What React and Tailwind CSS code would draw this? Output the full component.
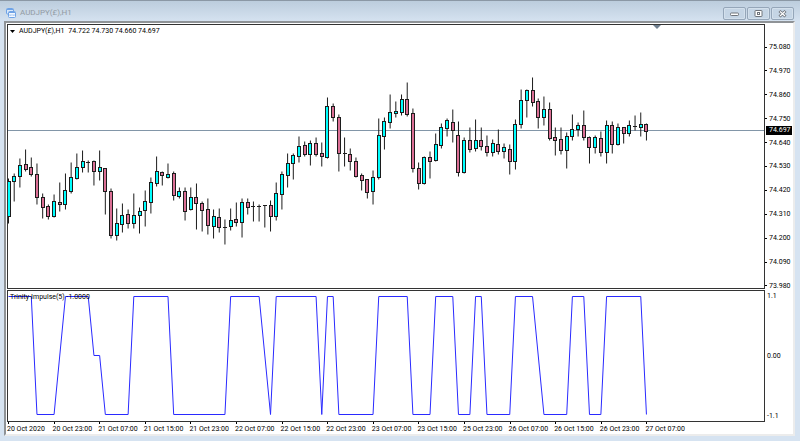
import React from "react";

const STEP = 5.696;
const PANE_TOP = 24;
const INDICATOR_TOP = 291;

// [high, body top, body bottom, low, u = up / d = down]
const candles = [
  [178, 181, 216, 222, "u"], [173, 176, 181, 200, "u"], [158, 165, 176, 186, "u"], [149, 164, 169, 170, "d"],
  [157, 167, 174, 175, "d"], [163, 174, 197, 203, "d"], [193, 197, 207, 217, "d"], [204, 206, 216, 218, "d"],
  [194, 201, 216, 216, "u"], [182, 202, 204, 210, "d"], [173, 190, 204, 208, "u"], [162, 177, 191, 192, "u"],
  [153, 167, 178, 178, "u"], [150, 161, 167, 171, "u"], [160, 161, 162, 171, "d"], [160, 161, 171, 184, "d"],
  [150, 167, 171, 179, "u"], [168, 168, 191, 213, "d"], [188, 191, 235, 237, "d"], [208, 223, 235, 239, "u"],
  [203, 215, 224, 231, "u"], [209, 214, 223, 227, "d"], [193, 215, 223, 227, "u"], [207, 211, 215, 232, "u"],
  [190, 201, 210, 225, "u"], [177, 182, 202, 212, "u"], [156, 171, 183, 185, "u"], [171, 172, 175, 184, "d"],
  [163, 174, 177, 177, "u"], [171, 173, 195, 199, "d"], [187, 191, 196, 197, "u"], [187, 191, 211, 219, "d"],
  [187, 197, 209, 209, "u"], [183, 197, 203, 228, "d"], [201, 203, 210, 230, "d"], [198, 209, 225, 233, "d"],
  [209, 216, 226, 237, "u"], [208, 217, 227, 231, "d"], [219, 226, 227, 243, "d"], [208, 220, 226, 229, "u"],
  [202, 219, 222, 225, "d"], [198, 202, 222, 236, "u"], [198, 202, 207, 213, "d"], [201, 205, 206, 220, "d"],
  [204, 205, 206, 220, "d"], [205, 205, 205, 226, "d"], [200, 205, 216, 230, "d"], [182, 193, 216, 219, "u"],
  [171, 174, 194, 208, "u"], [153, 163, 175, 186, "u"], [153, 155, 163, 178, "u"], [136, 146, 156, 161, "u"],
  [141, 145, 154, 155, "d"], [140, 143, 154, 164, "u"], [137, 143, 154, 155, "d"], [142, 153, 156, 165, "d"],
  [97, 106, 157, 157, "u"], [103, 106, 117, 120, "d"], [114, 117, 153, 170, "d"], [137, 152, 153, 165, "d"],
  [148, 154, 161, 169, "d"], [157, 161, 176, 176, "d"], [173, 175, 180, 189, "d"], [179, 179, 192, 197, "d"],
  [170, 177, 191, 203, "u"], [118, 135, 177, 178, "u"], [117, 121, 136, 148, "u"], [94, 112, 122, 127, "u"],
  [101, 111, 113, 116, "u"], [94, 99, 112, 114, "u"], [82, 99, 114, 115, "d"], [108, 113, 168, 171, "d"],
  [162, 168, 183, 188, "d"], [156, 157, 183, 183, "u"], [151, 157, 161, 177, "d"], [133, 144, 160, 160, "u"],
  [123, 127, 145, 147, "u"], [118, 120, 128, 135, "u"], [109, 122, 130, 141, "d"], [121, 135, 172, 175, "d"],
  [137, 140, 172, 172, "u"], [127, 140, 149, 151, "d"], [119, 140, 148, 150, "u"], [127, 140, 146, 149, "d"],
  [135, 146, 152, 155, "d"], [139, 143, 152, 155, "u"], [129, 144, 151, 153, "d"], [143, 147, 151, 157, "u"],
  [144, 149, 161, 173, "d"], [119, 124, 161, 168, "u"], [89, 100, 124, 127, "u"], [89, 90, 100, 116, "u"],
  [77, 90, 102, 105, "d"], [98, 101, 117, 127, "d"], [96, 109, 117, 124, "u"], [102, 109, 138, 139, "d"],
  [127, 137, 140, 154, "d"], [127, 139, 150, 153, "d"], [132, 136, 150, 167, "u"], [114, 129, 136, 139, "u"],
  [122, 125, 129, 135, "u"], [110, 125, 137, 139, "d"], [136, 137, 147, 162, "d"], [135, 137, 147, 152, "u"],
  [131, 138, 152, 155, "d"], [120, 125, 152, 162, "u"], [121, 125, 144, 152, "d"], [123, 127, 144, 144, "u"],
  [127, 127, 133, 142, "d"], [120, 125, 133, 135, "u"], [115, 125, 126, 129, "d"], [112, 124, 127, 135, "u"],
  [123, 124, 131, 139, "d"],
];

// [bar index, impulse value]
const impulse = [
  [0, 1], [4, 1], [5, -1], [8, -1], [10, 1], [14, 1], [15, 0], [16, 0], [17, -1], [21, -1], [22, 1], [28, 1],
  [29, -1], [38, -1], [39, 1], [44, 1], [46, -1], [47, 1], [54, 1], [55, -1], [56, 1], [57, 1], [58, -1],
  [64, -1], [65, 1], [70, 1], [71, -1], [74, -1], [75, 1], [78, 1], [79, -1], [81, -1], [82, 1], [83, 1],
  [84, -1], [88, -1], [89, 1], [92, 1], [94, -1], [98, -1], [99, 1], [101, 1], [102, -1], [104, -1],
  [105, 1], [111, 1], [112, -1],
];

const prices = [
  "75.080", "74.970", "74.860", "74.750", "74.640", "74.530",
  "74.420", "74.310", "74.200", "74.090", "73.980",
];

const times = [
  "20 Oct 2020", "20 Oct 23:00", "21 Oct 07:00", "21 Oct 15:00", "21 Oct 23:00",
  "22 Oct 07:00", "22 Oct 15:00", "22 Oct 23:00", "23 Oct 07:00", "23 Oct 15:00",
  "25 Oct 23:00", "26 Oct 07:00", "26 Oct 15:00", "26 Oct 23:00", "27 Oct 07:00",
];

const Candle = ({ index, data }) => {
  const [high, top, bottom, low, dir] = data;
  const x = index * STEP + 0.5;
  // bodies snap to whole pixels so their outline stays sharp
  const left = Math.round(x) - 1.5;
  const y = (v) => v - PANE_TOP - 0.5;
  return (
    <g stroke="#1c1c1c">
      <line x1={x} x2={x} y1={y(high)} y2={y(low) + 1} />
      {bottom - top < 2 ? (
        <line x1={left - 0.5} x2={left + 3.5} y1={y(bottom)} y2={y(bottom)} />
      ) : (
        <rect
          x={left}
          y={y(top)}
          width={3}
          height={bottom - top}
          fill={dir === "u" ? "#00ffff" : "#db6f95"}
        />
      )}
    </g>
  );
};

const PriceChart = () => (
  <svg className="block h-full w-full" aria-label="Price chart">
    <line x1="0" x2="100%" y1="105.5" y2="105.5" stroke="#8296a8" />
    {candles.map((c, i) => (
      <Candle key={i} index={i} data={c} />
    ))}
    <path d="M645 0h8l-4 4z" fill="#708090" />
  </svg>
);

const ImpulseChart = () => (
  <svg className="block h-full w-full" aria-label="Trinity Impulse">
    <polyline
      points={impulse
        .map(([i, v]) => `${i * STEP + 0.5},${355.5 - v * 59 - INDICATOR_TOP}`)
        .join(" ")}
      fill="none"
      stroke="#2a2aff"
    />
  </svg>
);

const AxisLabel = ({ children }) => (
  <div className="flex h-[10px] items-center gap-[2px]">
    <span className="h-px w-[2px] bg-black" />
    <span>{children}</span>
  </div>
);

const WindowButton = ({ label, children }) => (
  <button
    type="button"
    aria-label={label}
    className="flex h-[13px] w-[23px] items-center justify-center rounded-[2px] border border-[#95a6b9] bg-[#c5d5e5] shadow-[inset_0_0_0_1px_#d3e0ec]"
  >
    <svg width="11" height="9" viewBox="0 0 11 9" fill="none">
      {children}
    </svg>
  </button>
);

const TitleBar = () => (
  <header className="flex h-[21px] items-center justify-between border-t border-[#8b98a5] bg-linear-to-b from-[#bccddd] to-[#d5e2f0] pr-[6px] pl-[6px]">
    <div className="flex items-center gap-[4px] pt-[4px]">
      <svg width="10" height="10" viewBox="0 0 10 10" fill="none">
        <rect x="0.500" y="0.500" width="7" height="5.500" rx="1" fill="#d9e9fb" stroke="#6fa3e6" />
        <path d="M1 1.500h6" stroke="#6fa3e6" />
        <rect x="2.500" y="3.500" width="7" height="6" rx="1" fill="#f4f9ff" stroke="#6fa3e6" />
        <path d="M3 4.500h6" stroke="#6fa3e6" />
        <path d="M4 8V6.500l1 1 1-1 1 1 1-1V8" stroke="#8db6ec" strokeWidth="0.800" />
      </svg>
      <h1 className="text-[8px] leading-[10px] text-[#929aa3]">AUDJPY(£),H1</h1>
    </div>
    <div className="flex gap-[1px] pt-[4px]">
      <WindowButton label="Minimize">
        <rect x="1.500" y="4" width="8" height="2.500" rx="0.800" fill="#fff" stroke="#6f747b" />
      </WindowButton>
      <WindowButton label="Restore">
        <rect x="2" y="1.500" width="7" height="6" rx="0.500" fill="#fff" stroke="#6f747b" />
        <rect x="4.500" y="3.500" width="2" height="2" fill="#fff" stroke="#6f747b" />
      </WindowButton>
      <WindowButton label="Close">
        <path d="M2.500 2l6 5.500M8.500 2l-6 5.500" stroke="#6f747b" strokeWidth="3" />
        <path d="M3 2.500l5 4.500M8 2.500l-5 4.500" stroke="#fff" strokeWidth="1.200" />
      </WindowButton>
    </div>
  </header>
);

const App = () => {
  return (
    <div className="flex min-h-screen flex-col bg-[#d6e3f1] font-['Roboto','Noto_Sans',sans-serif] text-[7px] leading-[10px] text-black">
      <TitleBar />
      <main className="mr-[5px] ml-[4px] border-2 border-t-[#8f9397] border-r-[#ececec] border-b-[#ececec] border-l-[#8f9397] bg-white pt-px pl-px">
        <div className="flex">
          <div className="flex min-w-0 flex-1 flex-col">
            <section className="relative h-[265px] border border-[#333]">
              <PriceChart />
              <div className="absolute top-[1px] left-[2px] flex items-center gap-[4px] whitespace-nowrap">
                <svg width="5" height="3" viewBox="0 0 5 3">
                  <path d="M0 0h5L2.500 3z" fill="#000" />
                </svg>
                <span>AUDJPY(£),H1</span>
                <span>74.722 74.730 74.660 74.697</span>
              </div>
            </section>
            <section className="relative mt-px h-[132px] border border-[#333]">
              <ImpulseChart />
              <div className="absolute top-px left-[2px] whitespace-nowrap">
                Trinity-Impulse(5) -1.0000
              </div>
            </section>
          </div>
          <aside className="relative w-[28px] shrink-0">
            <div className="flex h-[267px] flex-col justify-between pt-[18px]">
              {prices.map((p) => (
                <AxisLabel key={p}>{p}</AxisLabel>
              ))}
            </div>
            <div className="flex h-[130px] flex-col justify-between pl-[2px]">
              <span>1.1</span>
              <span>0.00</span>
              <span>-1.1</span>
            </div>
            <div className="absolute top-[102px] left-px h-[9px] w-[26px] bg-black pl-[3px] leading-[9px] text-white">
              74.697
            </div>
          </aside>
        </div>
        <div className="grid w-[684px] grid-cols-15 whitespace-nowrap">
          {times.map((t) => (
            <div key={t} className="flex flex-col">
              <span className="ml-px h-[2px] w-px bg-black" />
              <span>{t}</span>
            </div>
          ))}
        </div>
      </main>
    </div>
  );
};

export default App;
